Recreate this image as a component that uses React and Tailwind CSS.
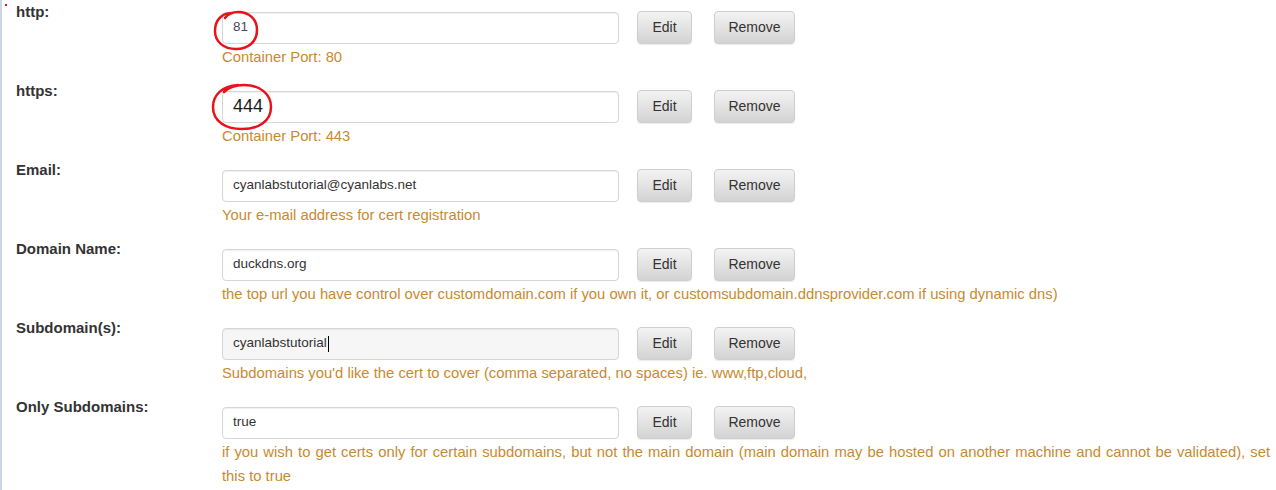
const rows = [
  { label: "http:", value: "81", help: "Container Port: 80", mark: "small" },
  { label: "https:", value: "444", help: "Container Port: 443", mark: "big" },
  { label: "Email:", value: "cyanlabstutorial@cyanlabs.net", help: "Your e-mail address for cert registration" },
  {
    label: "Domain Name:",
    value: "duckdns.org",
    help: "the top url you have control over customdomain.com if you own it, or customsubdomain.ddnsprovider.com if using dynamic dns)",
  },
  {
    label: "Subdomain(s):",
    value: "cyanlabstutorial",
    help: "Subdomains you'd like the cert to cover (comma separated, no spaces) ie. www,ftp,cloud,",
    focused: true,
  },
  {
    label: "Only Subdomains:",
    value: "true",
    help: "if you wish to get certs only for certain subdomains, but not the main domain (main domain may be hosted on another machine and cannot be validated), set this to true",
  },
];

const Button = ({ children, w }) => (
  <button
    className={`${w} h-[33px] rounded-[4px] border border-[#cfcfcf] bg-gradient-to-b from-[#f3f3f3] to-[#d3d3d3] text-[14px] text-[#333] shadow-[0_1px_1px_rgba(0,0,0,0.08)]`}
  >
    {children}
  </button>
);

const Row = ({ row }) => (
  <div className="flex h-[79px]">
    <div className="w-[220px] shrink-0 pl-[14px] -mt-[9px] text-[15px] font-bold leading-5 text-[#333]">{row.label}</div>
    <div className="flex-1 pr-[6px]">
      <div className="flex items-center">
        <div
          className={`relative flex h-[32px] w-[397px] items-center rounded-[4px] border border-[#d6d6d6] pl-[10px] shadow-[inset_0_1px_1px_rgba(0,0,0,0.06)] ${
            row.focused ? "bg-[#f6f6f6]" : "bg-white"
          }`}
        >
          <span
            className={
              row.mark === "big"
                ? "text-[18px] text-[#1a1a1a]"
                : row.mark === "small"
                ? "text-[13.5px] text-[#4a4460]"
                : "text-[13.5px] text-[#333]"
            }
          >
            {row.value}
          </span>
          {row.focused && <span className="ml-[1px] h-[16px] w-px bg-black" />}
          {row.mark === "small" && (
            <svg className="absolute -left-[11px] -top-[3px]" width="50" height="42" viewBox="0 0 50 42" fill="none">
              <path
                d="M20 3 C8 3 3 12 3 21 C3 32 12 39 24 39 C36 39 45 32 45 20 C45 9 37 2 26 2 C21 2 16 4 13 8"
                stroke="#e8121b"
                strokeWidth="2.5"
                strokeLinecap="round"
              />
            </svg>
          )}
          {row.mark === "big" && (
            <svg className="absolute -left-[13px] -top-[10px]" width="64" height="52" viewBox="0 0 64 52" fill="none">
              <path
                d="M28 3 C12 4 3 13 3 25 C3 39 15 47 32 47 C49 47 61 39 61 25 C61 12 50 3 34 3 C26 3 18 6 14 10"
                stroke="#e8121b"
                strokeWidth="2.5"
                strokeLinecap="round"
              />
            </svg>
          )}
        </div>
        <div className="ml-[18px]">
          <Button w="w-[55px]">Edit</Button>
        </div>
        <div className="ml-[22px]">
          <Button w="w-[81px]">Remove</Button>
        </div>
      </div>
      <p className="mt-[1px] text-justify text-[14.8px] leading-6 text-[#c88a2f]">{row.help}</p>
    </div>
  </div>
);

export default function App() {
  return (
    <div
      className="relative h-[490px] w-[1276px] overflow-hidden border-l-2 border-[#c9d6e8] bg-white pt-[11px]"
      style={{ fontFamily: '"Liberation Sans", Arial, sans-serif' }}
    >
      <span className="absolute left-[3px] top-[4px] h-[2px] w-[2px] bg-[#e8121b]" />
      {rows.map((r) => (
        <Row key={r.label} row={r} />
      ))}
    </div>
  );
}
